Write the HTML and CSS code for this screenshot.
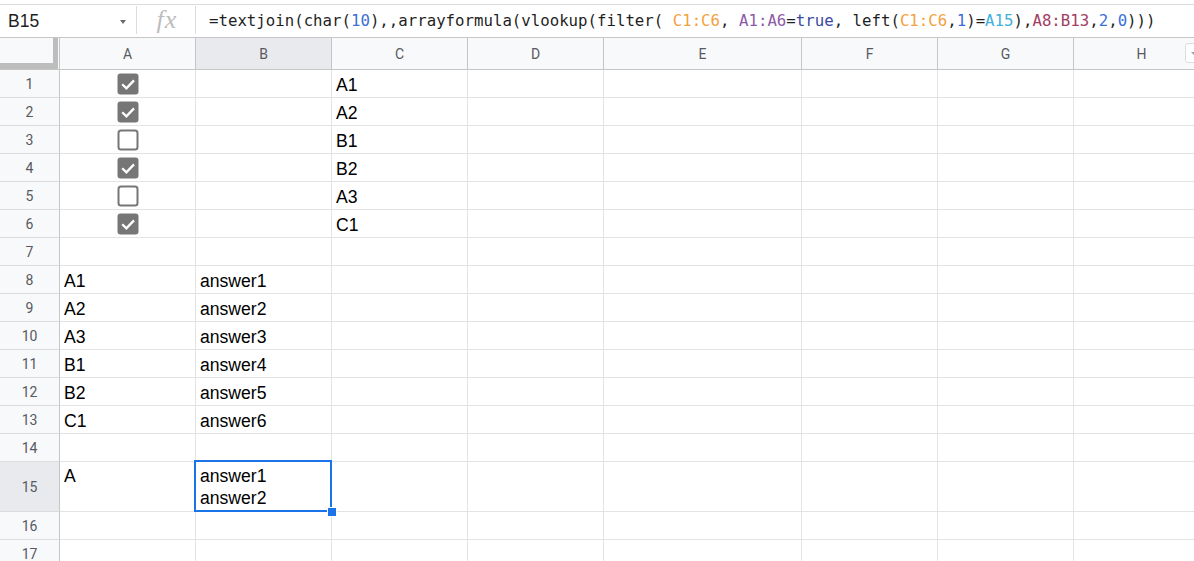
FILE: index.html
```html
<!DOCTYPE html>
<html>
<head>
<meta charset="utf-8">
<link rel="stylesheet" href="styles.css">
</head>
<body>
<svg class="defs" width="0" height="0">
  <defs>
    <g id="on">
      <rect x="0.5" y="0.5" width="21" height="21" rx="3" fill="#767676"/>
      <path d="M5.2 11.3 L9.4 15.4 L17 7.4" fill="none" stroke="#fff" stroke-width="2.3"/>
    </g>
    <g id="off">
      <rect x="1.5" y="1.5" width="19" height="19" rx="2.5" fill="#fff" stroke="#767676" stroke-width="2"/>
    </g>
  </defs>
</svg>
<div class="app">
  <div class="fbar">
    <div class="namebox"><span class="nb-text">B15</span><span class="nb-arrow"></span></div>
    <div class="sep"></div>
    <div class="fx">fx</div>
    <div class="sep"></div>
    <div class="formula">=textjoin(char(<span class="n">10</span>),,arrayformula(vlookup(filter( <span class="r1">C1:C6</span>, <span class="r2">A1:A6</span>=<span class="t">true</span>, left(<span class="r1">C1:C6</span>,<span class="n">1</span>)=<span class="r3">A15</span>),<span class="r4">A8:B13</span>,<span class="n">2</span>,<span class="n">0</span>)))</div>
  </div>

  <div class="sheet">
    <div class="row hdr">
      <div class="corner"><span class="fz-v"></span><span class="fz-h"></span></div>
      <div class="ch">A</div><div class="ch sel">B</div><div class="ch">C</div><div class="ch">D</div><div class="ch">E</div><div class="ch">F</div><div class="ch">G</div><div class="ch">H<span class="hbtn"></span></div>
    </div>

    <div class="row"><div class="rh">1</div><div class="c cbc"><svg class="cb" viewBox="0 0 22 22"><use href="#on"/></svg></div><div class="c"></div><div class="c">A1</div><div class="c"></div><div class="c"></div><div class="c"></div><div class="c"></div><div class="c"></div></div>
    <div class="row"><div class="rh">2</div><div class="c cbc"><svg class="cb" viewBox="0 0 22 22"><use href="#on"/></svg></div><div class="c"></div><div class="c">A2</div><div class="c"></div><div class="c"></div><div class="c"></div><div class="c"></div><div class="c"></div></div>
    <div class="row"><div class="rh">3</div><div class="c cbc"><svg class="cb" viewBox="0 0 22 22"><use href="#off"/></svg></div><div class="c"></div><div class="c">B1</div><div class="c"></div><div class="c"></div><div class="c"></div><div class="c"></div><div class="c"></div></div>
    <div class="row"><div class="rh">4</div><div class="c cbc"><svg class="cb" viewBox="0 0 22 22"><use href="#on"/></svg></div><div class="c"></div><div class="c">B2</div><div class="c"></div><div class="c"></div><div class="c"></div><div class="c"></div><div class="c"></div></div>
    <div class="row"><div class="rh">5</div><div class="c cbc"><svg class="cb" viewBox="0 0 22 22"><use href="#off"/></svg></div><div class="c"></div><div class="c">A3</div><div class="c"></div><div class="c"></div><div class="c"></div><div class="c"></div><div class="c"></div></div>
    <div class="row"><div class="rh">6</div><div class="c cbc"><svg class="cb" viewBox="0 0 22 22"><use href="#on"/></svg></div><div class="c"></div><div class="c">C1</div><div class="c"></div><div class="c"></div><div class="c"></div><div class="c"></div><div class="c"></div></div>
    <div class="row"><div class="rh">7</div><div class="c"></div><div class="c"></div><div class="c"></div><div class="c"></div><div class="c"></div><div class="c"></div><div class="c"></div><div class="c"></div></div>
    <div class="row"><div class="rh">8</div><div class="c">A1</div><div class="c">answer1</div><div class="c"></div><div class="c"></div><div class="c"></div><div class="c"></div><div class="c"></div><div class="c"></div></div>
    <div class="row"><div class="rh">9</div><div class="c">A2</div><div class="c">answer2</div><div class="c"></div><div class="c"></div><div class="c"></div><div class="c"></div><div class="c"></div><div class="c"></div></div>
    <div class="row"><div class="rh">10</div><div class="c">A3</div><div class="c">answer3</div><div class="c"></div><div class="c"></div><div class="c"></div><div class="c"></div><div class="c"></div><div class="c"></div></div>
    <div class="row"><div class="rh">11</div><div class="c">B1</div><div class="c">answer4</div><div class="c"></div><div class="c"></div><div class="c"></div><div class="c"></div><div class="c"></div><div class="c"></div></div>
    <div class="row"><div class="rh">12</div><div class="c">B2</div><div class="c">answer5</div><div class="c"></div><div class="c"></div><div class="c"></div><div class="c"></div><div class="c"></div><div class="c"></div></div>
    <div class="row"><div class="rh">13</div><div class="c">C1</div><div class="c">answer6</div><div class="c"></div><div class="c"></div><div class="c"></div><div class="c"></div><div class="c"></div><div class="c"></div></div>
    <div class="row"><div class="rh">14</div><div class="c"></div><div class="c"></div><div class="c"></div><div class="c"></div><div class="c"></div><div class="c"></div><div class="c"></div><div class="c"></div></div>
    <div class="row tall"><div class="rh sel">15</div><div class="c top">A</div><div class="c top active">answer1<br>answer2<span class="selbox"></span><span class="handle"></span></div><div class="c"></div><div class="c"></div><div class="c"></div><div class="c"></div><div class="c"></div><div class="c"></div></div>
    <div class="row"><div class="rh">16</div><div class="c"></div><div class="c"></div><div class="c"></div><div class="c"></div><div class="c"></div><div class="c"></div><div class="c"></div><div class="c"></div></div>
    <div class="row"><div class="rh">17</div><div class="c"></div><div class="c"></div><div class="c"></div><div class="c"></div><div class="c"></div><div class="c"></div><div class="c"></div><div class="c"></div></div>
  </div>
</div>
</body>
</html>
```

FILE: styles.css
```css
* { box-sizing: border-box; }
html, body { margin: 0; padding: 0; background: #fff; }
body { width: 1194px; height: 561px; overflow: hidden; font-family: "Liberation Sans", Arial, sans-serif; }
.defs { position: absolute; width: 0; height: 0; }

.app { width: 1194px; overflow: hidden; }

/* formula bar */
.fbar {
  margin-top: 4px;
  height: 34px;
  border-top: 1px solid #dadce0;
  border-bottom: 1px solid #c4c7c5;
  display: flex;
  align-items: stretch;
  background: #fff;
}
.namebox {
  width: 136px;
  display: flex;
  align-items: center;
  padding-left: 8px;
  padding-right: 10px;
}
.nb-text { font-family: "Liberation Sans", Arial, sans-serif; font-size: 17.5px; color: #1f1f1f; flex: 1; }
.nb-arrow {
  width: 0; height: 0;
  border-left: 3.5px solid transparent;
  border-right: 3.5px solid transparent;
  border-top: 4px solid #6b6b6b;
  margin-top: 2px;
}
.sep { width: 1px; background: #dadce0; margin: 1px 0 3px; }
.fx {
  width: 58px;
  display: flex;
  align-items: center;
  justify-content: center;
  font-family: "Liberation Serif", "Times New Roman", serif;
  font-style: italic;
  font-size: 26px;
  color: #bdbdbd;
  padding-left: 2px;
  padding-bottom: 2px;
  letter-spacing: 1px;
}
.formula {
  padding-left: 13px;
  display: flex;
  align-items: center;
  font-family: "DejaVu Sans Mono", "Liberation Mono", monospace;
  font-size: 15.72px;
  color: #1f1f1f;
  white-space: pre;
  padding-bottom: 1px;
}
.formula .n { color: #3a6fd8; }
.formula .r1 { color: #f4a23f; }
.formula .r2 { color: #8e5ba8; }
.formula .t { color: #3c4aa0; }
.formula .r3 { color: #3fb1da; }
.formula .r4 { color: #a33d63; }

/* sheet grid */
.sheet { display: flex; flex-direction: column; }
.row {
  display: grid;
  grid-template-columns: 60px 136px 136px 136px 136px 198px 136px 136px 136px;
  height: 28px;
}
.row.hdr { height: 32px; }
.row.tall { height: 50px; }

.corner {
  position: relative;
  background: #f8f9fa;
  border-right: 1px solid #c4c7c5;
  border-bottom: 1px solid #c4c7c5;
}
.fz-v { position: absolute; left: 53px; top: 0; width: 5px; height: 31px; background: #bdbdbd; }
.fz-h { position: absolute; left: 0; top: 25px; width: 58px; height: 6px; background: #bdbdbd; }

.ch {
  position: relative;
  background: #f8f9fa;
  border-right: 1px solid #c4c7c5;
  border-bottom: 1px solid #c4c7c5;
  display: flex;
  align-items: center;
  justify-content: center;
  font-family: Roboto, "Liberation Sans", sans-serif;
  font-size: 14px;
  color: #575a5f;
  padding-top: 1px;
}
.ch.sel { background: #e8eaed; }
.hbtn {
  position: absolute;
  left: 111px;
  top: 5px;
  width: 20px;
  height: 20px;
  border: 1px solid #dadce0;
  border-radius: 3px;
  background: #fff;
}
.hbtn::after {
  content: "";
  position: absolute;
  left: 5px;
  top: 8px;
  border-left: 4px solid transparent;
  border-right: 4px solid transparent;
  border-top: 4px solid #9aa0a6;
}

.rh {
  background: #f8f9fa;
  border-right: 1px solid #c4c7c5;
  border-bottom: 1px solid #dcdcdc;
  display: flex;
  align-items: center;
  justify-content: center;
  font-family: Roboto, "Liberation Sans", sans-serif;
  font-size: 14px;
  color: #575a5f;
}
.rh.sel { background: #e8eaed; }

.c {
  position: relative;
  border-right: 1px solid #e2e3e3;
  border-bottom: 1px solid #e2e3e3;
  display: flex;
  align-items: flex-end;
  padding: 0 4px 1px 4px;
  font-size: 17.6px;
  line-height: 22px;
  color: #000;
  white-space: nowrap;
}
.c.top { align-items: flex-start; padding-top: 3px; display: block; }
.c.active { z-index: 5; }
.c.cbc { align-items: center; justify-content: center; padding: 0; }
.cb { width: 22px; height: 22px; display: block; margin-top: 1px; }

.selbox {
  position: absolute;
  left: -2px;
  top: -2px;
  right: -1px;
  bottom: -1px;
  border: 2px solid #1a73e8;
  pointer-events: none;
}
.handle {
  position: absolute;
  right: -6px;
  bottom: -6px;
  width: 10px;
  height: 10px;
  background: #1a73e8;
  border: 1px solid #fff;
}
```
